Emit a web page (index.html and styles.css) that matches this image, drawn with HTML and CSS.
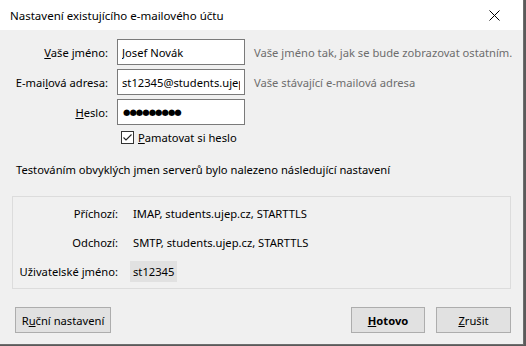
FILE: index.html
```html
<!DOCTYPE html>
<html lang="cs">
<head>
  <meta charset="UTF-8" />
  <title>Nastavení existujícího e-mailového účtu</title>
  <link rel="stylesheet" href="styles.css">
</head>
<body>
  <div class="window">
    <div class="titlebar">
      <span class="title">Nastavení existujícího e-mailového účtu</span>
      <span class="close">
        <svg width="11" height="11" viewBox="0 0 11 11"><path d="M0.5 0.5L10.5 10.5M10.5 0.5L0.5 10.5" stroke="#000" stroke-width="1" fill="none"/></svg>
      </span>
    </div>

    <div class="content">
      <div class="form">
        <label class="lbl"><u>V</u>aše jméno:</label>
        <input class="field" type="text" value="Josef Novák">
        <span class="hint">Vaše jméno tak, jak se bude zobrazovat ostatním.</span>

        <label class="lbl">E-mai<u>l</u>ová adresa:</label>
        <input class="field" type="text" value="st12345@students.ujep.cz">
        <span class="hint">Vaše stávající e-mailová adresa</span>

        <label class="lbl"><u>H</u>eslo:</label>
        <div class="field dots">●●●●●●●●●</div>
        <span></span>

        <span></span>
        <label class="check">
          <span class="box">
            <svg width="13" height="13" viewBox="0 0 13 13"><rect x="0.5" y="0.5" width="12" height="12" fill="#fff" stroke="#333"/><path d="M2.5 6.5L5 9L10.5 3.5" stroke="#222" stroke-width="1.1" fill="none"/></svg>
          </span>
          <span><u>P</u>amatovat si heslo</span>
        </label>
        <span></span>
      </div>

      <p class="note">Testováním obvyklých jmen serverů bylo nalezeno následující nastavení</p>

      <div class="group">
        <span class="glbl">Příchozí:</span>
        <span class="gval">IMAP, students.ujep.cz, STARTTLS</span>
        <span class="glbl">Odchozí:</span>
        <span class="gval">SMTP, students.ujep.cz, STARTTLS</span>
        <span class="glbl">Uživatelské jméno:</span>
        <span class="gval"><span class="chip">st12345</span></span>
      </div>

      <div class="buttons">
        <button class="btn manual">R<u>u</u>ční nastavení</button>
        <span class="spacer"></span>
        <button class="btn done"><u>H</u>otovo</button>
        <button class="btn cancel"><u>Z</u>rušit</button>
      </div>
    </div>
  </div>
</body>
</html>
```

FILE: styles.css
```css
body {
  margin: 0;
  background: #5a5a5a;
  font-family: 'Noto Sans', 'Open Sans', sans-serif;
  font-size: 11.2px;
  color: #000;
}

.window {
  width: 523px;
  height: 344px;
  border-right: 1px solid #6e6e6e;
  border-bottom: 1px solid #6e6e6e;
  background: #f0f0f0;
  display: flex;
  flex-direction: column;
}

.titlebar {
  height: 30px;
  background: #fff;
  display: flex;
  align-items: center;
  padding-left: 10px;
  padding-right: 23px;
}

.title {
  flex: 1;
  font-size: 11.5px;
}

.close {
  display: flex;
  margin-top: 1px;
}

.content {
  padding: 9px 12px 0 12px;
}

.form {
  display: grid;
  grid-template-columns: 96px 128px 1fr;
  column-gap: 9px;
  row-gap: 4px;
  align-items: center;
}

.lbl {
  text-align: right;
  white-space: nowrap;
}

.field {
  box-sizing: border-box;
  width: 128px;
  height: 26px;
  margin: 0;
  padding: 0 4px;
  border: 1px solid #7a7a7a;
  background: #fff;
  font-family: inherit;
  font-size: 11.2px;
  color: #000;
  outline: none;
}

.dots {
  display: flex;
  align-items: center;
  font-family: 'DejaVu Sans', sans-serif;
  font-size: 8.5px;
  letter-spacing: -1px;
  padding-left: 5px;
}

.hint {
  color: #6d6d6d;
  white-space: nowrap;
}

.check {
  display: flex;
  align-items: center;
  gap: 4px;
  height: 16px;
  padding-left: 4px;
}

.box {
  display: flex;
}

.note {
  margin: 17px 0 0 4px;
  line-height: 16px;
}

.group {
  margin-top: 18px;
  height: 93px;
  box-sizing: border-box;
  border: 1px solid #dcdcdc;
  padding: 5px 0 0 0;
  display: grid;
  grid-template-columns: 105px auto;
  grid-auto-rows: 22px;
  column-gap: 12px;
  row-gap: 7px;
  align-items: center;
}

.glbl {
  text-align: right;
}

.gval {
  padding-left: 3px;
  display: flex;
  align-items: center;
  height: 22px;
}

.chip {
  background: #e1e1e1;
  margin-left: -3px;
  padding: 0 3px;
  height: 21px;
  display: flex;
  align-items: center;
}

.buttons {
  display: flex;
  margin-top: 18px;
  padding-left: 3px;
  gap: 11px;
}

.spacer {
  flex: 1;
}

.btn {
  height: 26px;
  box-sizing: border-box;
  border: 1px solid #adadad;
  background: #e1e1e1;
  font-family: inherit;
  font-size: 11.2px;
  color: #000;
  padding: 0;
}

.manual {
  width: 96px;
}

.done {
  width: 74px;
  font-weight: bold;
}

.cancel {
  width: 75px;
}
```
